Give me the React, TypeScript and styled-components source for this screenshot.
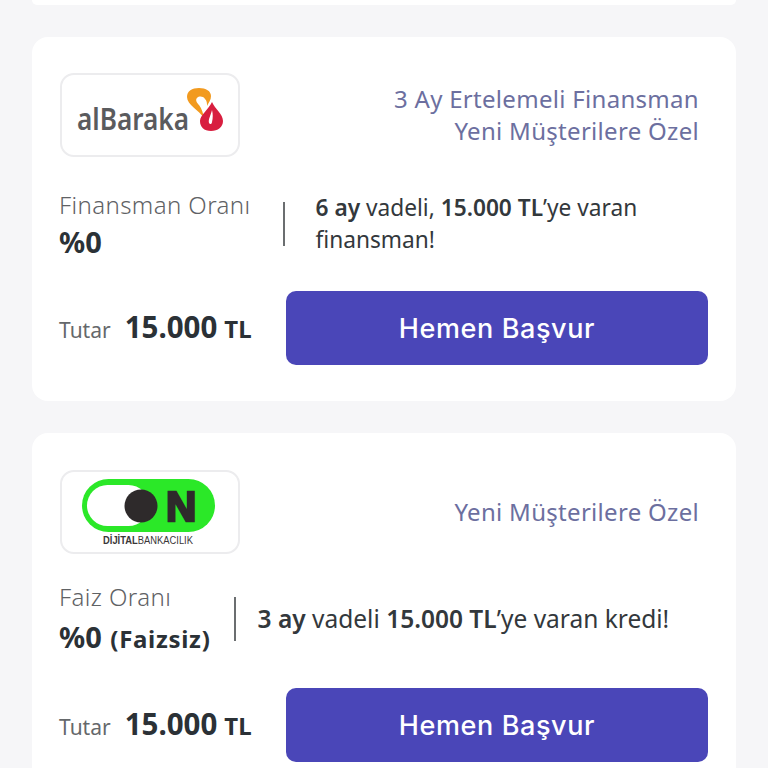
import React from "react";
import styled, { createGlobalStyle } from "styled-components";

const GlobalStyle = createGlobalStyle`
	html, body {
		margin: 0;
		padding: 0;
		background-color: #f6f6f8;
		font-family: "Noto Sans", "Open Sans", sans-serif;
	}
`;

const Page = styled.div`
	box-sizing: border-box;
	display: flex;
	flex-direction: column;
	gap: 32px;
	height: 768px;
	padding: 0 32px;
	overflow: hidden;
`;

const TopStub = styled.div`
	flex: none;
	height: 5px;
	background-color: #fff;
	border-radius: 0 0 16px 16px;
`;

const Card = styled.section<{ $top: number }>`
	flex: none;
	box-sizing: border-box;
	display: flex;
	flex-direction: column;
	height: ${(p) => 328 + p.$top}px;
	padding: ${(p) => p.$top}px 28px 36px 28px;
	background-color: #fff;
	border-radius: 16px;
`;

const CardHead = styled.div`
	display: flex;
	align-items: center;
	justify-content: space-between;
	height: 84px;
	padding-right: 9px;
`;

const LogoBox = styled.div`
	box-sizing: border-box;
	width: 180px;
	height: 84px;
	border: 2px solid #ececee;
	border-radius: 14px;
	overflow: hidden;

	svg {
		display: block;
		margin: -2px;
	}
`;

const Campaign = styled.div`
	font-size: 24px;
	line-height: 32px;
	color: #6c6f9f;
	text-align: right;
	letter-spacing: 0.3px;
`;

const InfoRow = styled.div<{ $top: number }>`
	display: flex;
	align-items: center;
	height: 86px;
	margin-top: ${(p) => p.$top}px;
`;

const Rate = styled.div<{ $gap: number }>`
	flex: none;
	display: flex;
	flex-direction: column;
	gap: ${(p) => p.$gap}px;
	margin-left: -1px;
`;

const RateLabel = styled.div`
	font-size: 24px;
	line-height: 32px;
	font-weight: 300;
	letter-spacing: 0.4px;
	color: #5f6265;
`;

const RateValue = styled.div`
	font-size: 29px;
	line-height: 36px;
	font-weight: 700;
	color: #2b3136;

	small {
		font-size: 24px;
		letter-spacing: 0.7px;
		margin-left: 1px;
	}
`;

const Divider = styled.div<{ $gap: number }>`
	flex: none;
	width: 2px;
	height: 44px;
	margin: 0 ${(p) => p.$gap - 1}px 0 ${(p) => p.$gap}px;
	background-color: #6b6e70;
`;

const Offer = styled.div<{ $size: number }>`
	font-size: ${(p) => p.$size}px;
	line-height: 32px;
	color: #33383c;

	b {
		font-weight: 600;
	}
`;

const CardFoot = styled.div`
	display: flex;
	align-items: center;
	justify-content: space-between;
	margin-top: auto;
`;

const Amount = styled.div`
	display: flex;
	align-items: baseline;
	margin: 0 0 4px -1px;
	color: #2b3136;
	font-weight: 700;
`;

const AmountLabel = styled.span`
	font-size: 21px;
	font-weight: 400;
	color: #65686b;
	margin-right: 14px;
`;

const AmountValue = styled.span`
	font-size: 29.5px;
	margin-right: 7px;
`;

const AmountUnit = styled.span`
	font-size: 24px;
`;

const ApplyButton = styled.button`
	width: 422px;
	height: 74px;
	border: none;
	border-radius: 10px;
	background-color: #4a46b8;
	color: #fff;
	font-family: "Inter", "Noto Sans", sans-serif;
	font-size: 27px;
	font-weight: 500;
	letter-spacing: 0.6px;
`;

function AlbarakaLogo() {
	return (
		<svg width="180" height="84" viewBox="0 0 180 84">
			<text
				x="17"
				y="57"
				fontFamily="'Noto Sans', sans-serif"
				fontSize="31"
				fontWeight="600"
				fill="#5a5b5e"
				textLength="112"
				lengthAdjust="spacingAndGlyphs"
			>
				alBaraka
			</text>
			<path
				d="M144 45 C139 37 127 32 127 24 C127 18 132 15 139 15 C146 15 151 18 151 23 C151 27 149 29 147 33 C147 30 147 28 145 26 C143 23 139 23 137 25 C135 27 137 30 139 32 C142 36 143 40 144 45 Z"
				fill="#f29a1f"
			/>
			<path
				d="M152 29 C155 36 163 41 163 48 C163 54 158 58 151 58 C144 58 140 54 140 48 C140 42 149 36 152 29 Z"
				fill="#d81e3f"
			/>
			<path
				d="M152 37 C151 42 148 46 149 50 C150 52 152 51 152 49 C153 45 153 41 152 37 Z"
				fill="#fff"
			/>
		</svg>
	);
}

function OnLogo() {
	return (
		<svg width="180" height="84" viewBox="0 0 180 84">
			<rect x="22" y="9" width="133" height="53" rx="26.5" fill="#2be828" />
			<rect x="27" y="15" width="62" height="41" rx="20.5" fill="#fff" />
			<circle cx="81" cy="36" r="16.5" fill="#2e2a2b" />
			<text
				x="106"
				y="51"
				fontFamily="'Liberation Sans', sans-serif"
				fontSize="42"
				fontWeight="700"
				fill="#2e2a2b"
				stroke="#2e2a2b"
				strokeWidth="2.5"
			>
				N
			</text>
			<text
				x="43"
				y="74"
				fontFamily="'Liberation Sans', sans-serif"
				fontSize="10"
				fill="#3a3738"
				textLength="90"
				lengthAdjust="spacingAndGlyphs"
			>
				<tspan fontWeight="700">DİJİTAL</tspan>BANKACILIK
			</text>
		</svg>
	);
}

export default function App() {
	return (
		<Page>
			<GlobalStyle />
			<TopStub />
			<Card $top={36}>
				<CardHead>
					<LogoBox>
						<AlbarakaLogo />
					</LogoBox>
					<Campaign>
						3 Ay Ertelemeli Finansman
						<br />
						Yeni Müşterilere Özel
					</Campaign>
				</CardHead>
				<InfoRow $top={24}>
					<Rate $gap={3}>
						<RateLabel>Finansman Oranı</RateLabel>
						<RateValue>%0</RateValue>
					</Rate>
					<Divider $gap={32} />
					<Offer $size={22.7}>
						<b>6 ay</b> vadeli, <b>15.000 TL</b>’ye varan
						<br />
						finansman!
					</Offer>
				</InfoRow>
				<CardFoot>
					<Amount>
						<AmountLabel>Tutar</AmountLabel>
						<AmountValue>15.000</AmountValue>
						<AmountUnit>TL</AmountUnit>
					</Amount>
					<ApplyButton>Hemen Başvur</ApplyButton>
				</CardFoot>
			</Card>
			<Card $top={37}>
				<CardHead>
					<LogoBox>
						<OnLogo />
					</LogoBox>
					<Campaign>Yeni Müşterilere Özel</Campaign>
				</CardHead>
				<InfoRow $top={22}>
					<Rate $gap={6}>
						<RateLabel>Faiz Oranı</RateLabel>
						<RateValue>
							%0 <small>(Faizsiz)</small>
						</RateValue>
					</Rate>
					<Divider $gap={23} />
					<Offer $size={24.5}>
						<b>3 ay</b> vadeli <b>15.000 TL</b>’ye varan kredi!
					</Offer>
				</InfoRow>
				<CardFoot>
					<Amount>
						<AmountLabel>Tutar</AmountLabel>
						<AmountValue>15.000</AmountValue>
						<AmountUnit>TL</AmountUnit>
					</Amount>
					<ApplyButton>Hemen Başvur</ApplyButton>
				</CardFoot>
			</Card>
		</Page>
	);
}
